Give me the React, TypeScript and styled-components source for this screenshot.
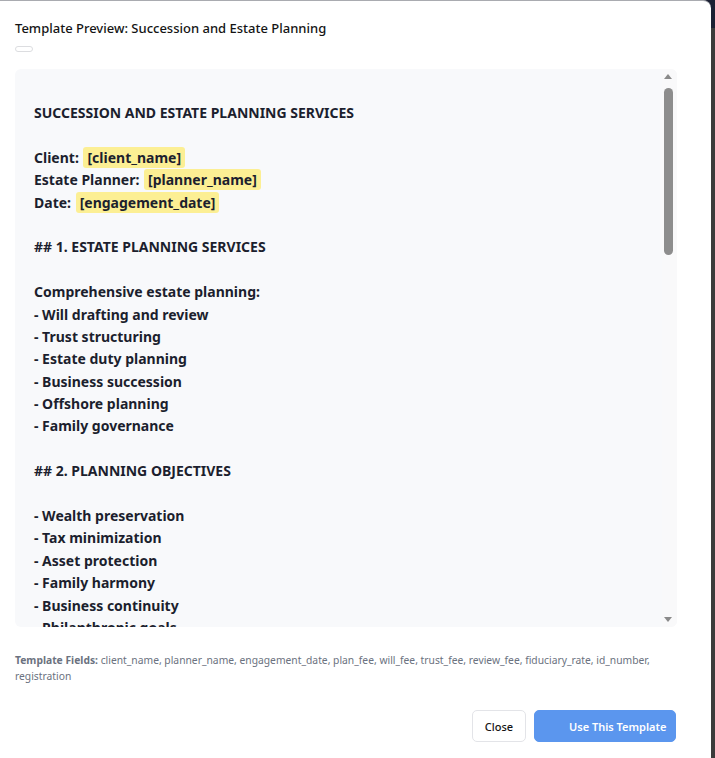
import React from "react";
import styled, { createGlobalStyle } from "styled-components";

const Global = createGlobalStyle`
  * { box-sizing: border-box; }
  html, body { margin: 0; padding: 0; height: 100%; }
  body {
    background: linear-gradient(#1b2033 0 28px, #3b3b3b 28px);
    font-family: "Noto Sans", "Open Sans", sans-serif;
    overflow: hidden;
  }
`;

const Modal = styled.div`
  width: 711px;
  height: 758px;
  background: #ffffff;
  border-top: 1px solid #a9abb0;
  border-top-right-radius: 8px;
  padding: 0 34px 0 15px;
  display: flex;
  flex-direction: column;
`;

const Title = styled.h2`
  margin: 17px 0 0;
  font-size: 13px;
  line-height: 20px;
  font-weight: 500;
  color: #141414;
`;

const Pill = styled.span`
  display: block;
  width: 18px;
  height: 6px;
  margin-top: 8px;
  border: 1px solid #dcdde0;
  border-radius: 3px;
`;

const Preview = styled.div`
  position: relative;
  margin-top: 17px;
  height: 558px;
  flex-shrink: 0;
  background: #f8f9fb;
  border-radius: 6px;
  overflow: hidden;
`;

const Content = styled.div`
  height: 100%;
  overflow: hidden;
  padding: 33px 24px 20px 19px;
  color: #1c1f2e;
  font-size: 14px;
  line-height: 1.6;
  font-weight: 700;
  white-space: pre-wrap;
`;

const Rail = styled.div`
  position: absolute;
  top: 0;
  right: 0;
  bottom: 0;
  width: 15px;
  background: #f9f9fa;
`;

const Arrow = styled.span<{ $down?: boolean }>`
  position: absolute;
  left: 2px;
  ${(p) => (p.$down ? "bottom: 5px;" : "top: 5px;")}
  width: 0;
  height: 0;
  border-left: 4.5px solid transparent;
  border-right: 4.5px solid transparent;
  ${(p) =>
    p.$down
      ? "border-top: 5px solid #8a8a8a;"
      : "border-bottom: 5px solid #8a8a8a;"}
`;

const Thumb = styled.span`
  position: absolute;
  left: 2px;
  width: 9px;
  top: 19px;
  height: 167px;
  border-radius: 5px;
  background: #8d8d8d;
`;

const Line = styled.div`
  min-height: 22.4px;
`;

const Field = styled.span`
  background: #fcef94;
  border-radius: 3px;
  padding: 1px 4px;
  margin-left: 1px;
`;

const Fields = styled.p`
  margin: 25px 0 0;
  font-size: 10.3px;
  line-height: 16px;
  color: #6b7280;
`;

const FieldsLabel = styled.strong`
  font-weight: 700;
`;

const Footer = styled.div`
  margin-top: 26px;
  display: flex;
  justify-content: flex-end;
  gap: 8px;
  padding-right: 1px;
`;

const Button = styled.button<{ $primary?: boolean }>`
  height: 32px;
  width: ${(p) => (p.$primary ? "142px" : "54px")};
  border-radius: 5px;
  font-family: inherit;
  font-size: 11px;
  font-weight: ${(p) => (p.$primary ? 600 : 500)};
  white-space: nowrap;
  cursor: pointer;
  border: 1px solid ${(p) => (p.$primary ? "#5b96ee" : "#e3e4e8")};
  background: ${(p) => (p.$primary ? "#5b96ee" : "#ffffff")};
  color: ${(p) => (p.$primary ? "#ffffff" : "#141414")};
  padding: ${(p) => (p.$primary ? "0 10px 0 34px" : "0")};
  text-align: ${(p) => (p.$primary ? "left" : "center")};
`;

type Seg = string | { f: string };

const doc: Seg[][] = [
  ["SUCCESSION AND ESTATE PLANNING SERVICES"],
  [],
  ["Client: ", { f: "[client_name]" }],
  ["Estate Planner: ", { f: "[planner_name]" }],
  ["Date: ", { f: "[engagement_date]" }],
  [],
  ["## 1. ESTATE PLANNING SERVICES"],
  [],
  ["Comprehensive estate planning:"],
  ["- Will drafting and review"],
  ["- Trust structuring"],
  ["- Estate duty planning"],
  ["- Business succession"],
  ["- Offshore planning"],
  ["- Family governance"],
  [],
  ["## 2. PLANNING OBJECTIVES"],
  [],
  ["- Wealth preservation"],
  ["- Tax minimization"],
  ["- Asset protection"],
  ["- Family harmony"],
  ["- Business continuity"],
  ["- Philanthropic goals"],
  [],
  ["## 3. PROFESSIONAL FEES"],
  [],
  ["Estate Plan: R", { f: "[plan_fee]" }],
  ["Will Drafting: R", { f: "[will_fee]" }],
  ["Trust Setup: R", { f: "[trust_fee]" }],
  ["Annual Review: R", { f: "[review_fee]" }],
  [],
  ["## 4. FIDUCIARY SERVICES"],
  [],
  ["Executor fees: ", { f: "[fiduciary_rate]" }, "% of estate value"],
  ["- Estate administration"],
  ["- Asset transfer"],
  ["- Beneficiary liaison"],
  ["- Tax clearance"],
  [],
  ["## 5. CLIENT OBLIGATIONS"],
  [],
  ["- Full asset disclosure"],
  ["- Timely document provision"],
  ["- Family information"],
  ["- Business valuations"],
  [],
  ["## 6. CONFIDENTIALITY"],
  [],
  ["All family and financial information"],
  ["is treated as strictly confidential."],
  [],
  ["## 7. REGULATORY COMPLIANCE"],
  [],
  ["- Wills Act requirements"],
  ["- Trust Property Control Act"],
  ["- Estate Duty Act"],
  ["- FAIS compliance"],
  [],
  ["## 8. ACCEPTANCE"],
  [],
  ["Client Signature: _______________"],
  ["ID Number: ", { f: "[id_number]" }],
  [],
  ["Planner Signature: _______________"],
  ["Registration: ", { f: "[registration]" }],
  [],
  ["Date: _______________"],
];

export default function App() {
  return (
    <>
      <Global />
      <Modal>
        <Title>Template Preview: Succession and Estate Planning</Title>
        <Pill />
        <Preview>
          <Content>
            {doc.map((line, i) => (
              <Line key={i}>
                {line.map((s, j) =>
                  typeof s === "string" ? (
                    <React.Fragment key={j}>{s}</React.Fragment>
                  ) : (
                    <Field key={j}>{s.f}</Field>
                  )
                )}
              </Line>
            ))}
          </Content>
          <Rail>
            <Arrow />
            <Thumb />
            <Arrow $down />
          </Rail>
        </Preview>
        <Fields>
          <FieldsLabel>Template Fields:</FieldsLabel> client_name, planner_name,
          engagement_date, plan_fee, will_fee, trust_fee, review_fee,
          fiduciary_rate, id_number, registration
        </Fields>
        <Footer>
          <Button>Close</Button>
          <Button $primary>Use This Template</Button>
        </Footer>
      </Modal>
    </>
  );
}
